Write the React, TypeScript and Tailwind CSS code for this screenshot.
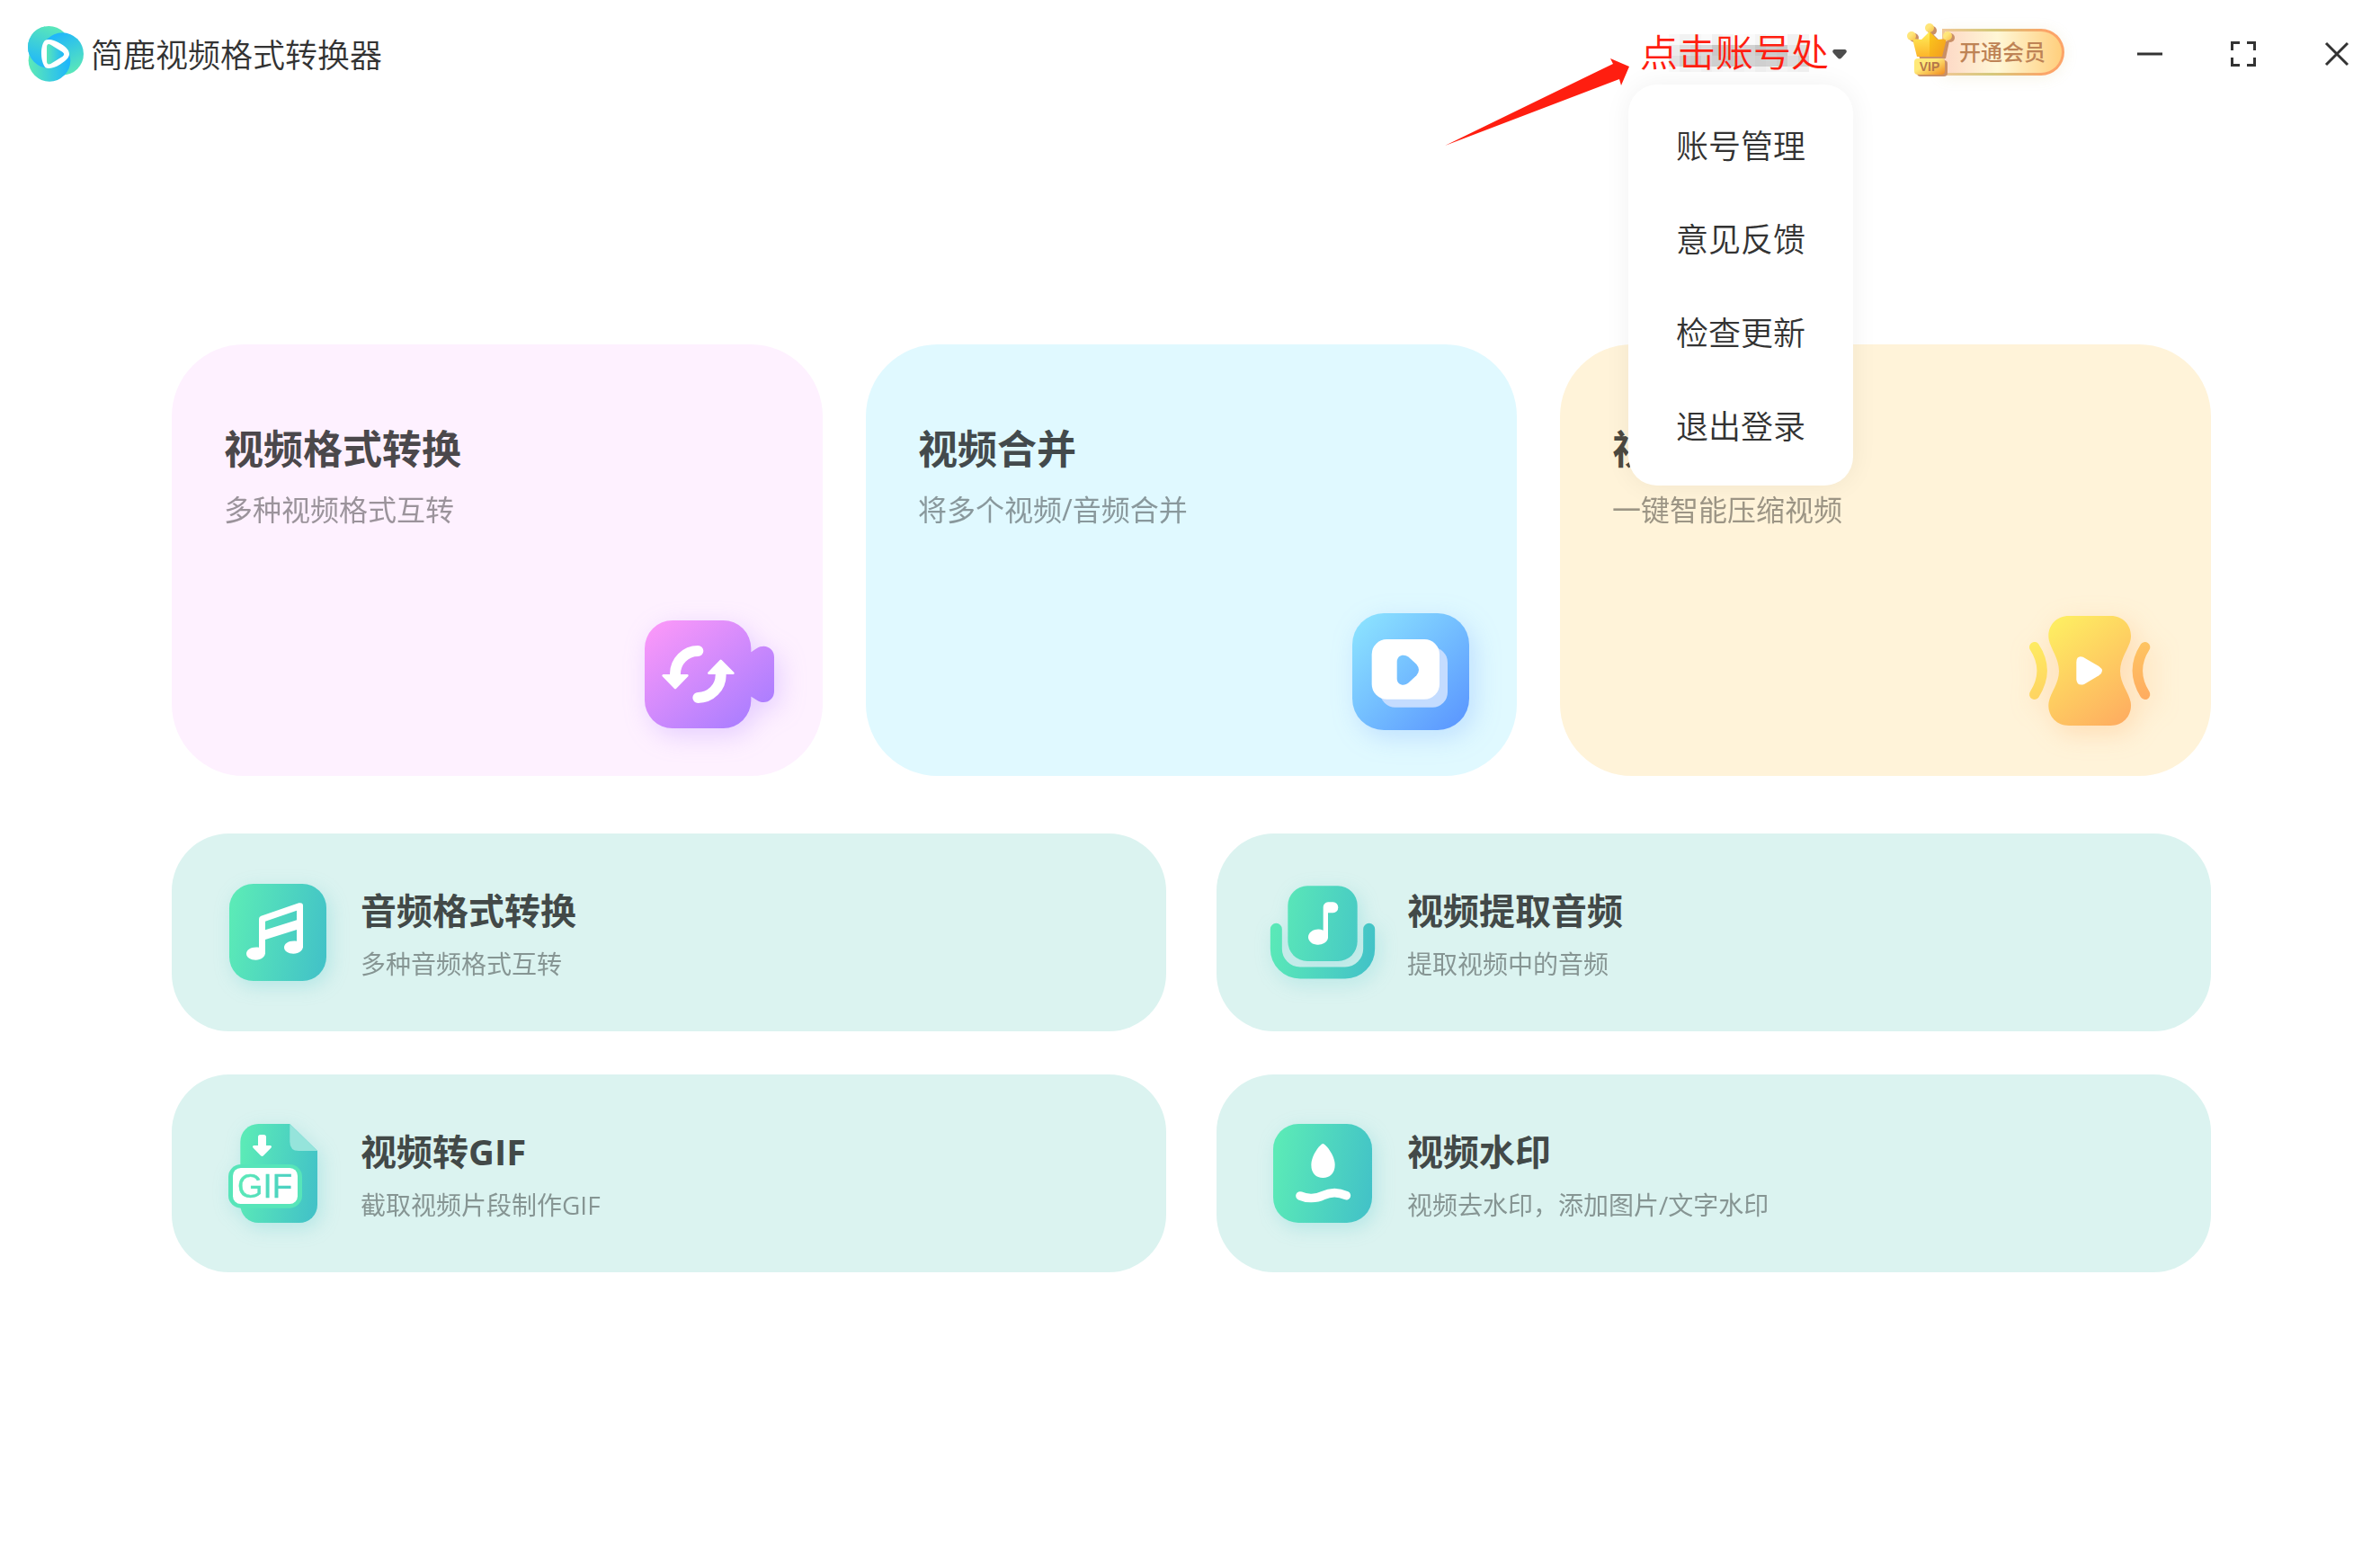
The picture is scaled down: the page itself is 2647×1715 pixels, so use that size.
import React, { useState } from 'react';

interface Tool {
  title: string;
  desc: string;
  icon: React.ReactNode;
  className: string;
}

function Logo() {
  return (
    <svg viewBox="93 87 186 186" className="h-[62px] w-[62px] flex-shrink-0" aria-hidden="true">
      <defs>
        <linearGradient id="logoA" gradientUnits="userSpaceOnUse" x1="180" y1="87" x2="130" y2="225">
          <stop offset="0" stopColor="#5be8b8" />
          <stop offset="1" stopColor="#1fb6fb" />
        </linearGradient>
        <linearGradient id="logoB" gradientUnits="userSpaceOnUse" x1="185" y1="115" x2="245" y2="245">
          <stop offset="0" stopColor="#1fb6fb" />
          <stop offset="1" stopColor="#5be8b8" />
        </linearGradient>
        <linearGradient id="logoC" gradientUnits="userSpaceOnUse" x1="100" y1="210" x2="230" y2="205">
          <stop offset="0" stopColor="#5be8b8" />
          <stop offset="1" stopColor="#1fb6fb" />
        </linearGradient>
        <linearGradient id="logoD" gradientUnits="userSpaceOnUse" x1="155" y1="180" x2="214" y2="180">
          <stop offset="0" stopColor="#5be8b8" />
          <stop offset="1" stopColor="#1fb6fb" />
        </linearGradient>
        <clipPath id="logoClip">
          <path d="M93 87 H150 V157 H165 V273 H93 Z" />
        </clipPath>
      </defs>
      <circle cx="163" cy="157" r="70" fill="url(#logoA)" />
      <circle cx="208" cy="180" r="71" fill="url(#logoB)" />
      <circle cx="165" cy="202" r="70" fill="url(#logoC)" />
      <circle cx="163" cy="157" r="70" fill="url(#logoA)" clipPath="url(#logoClip)" />
      <path
        d="M150 135 C160 128 182 133 203 146 C224 158 231 170 231 180 C231 191 222 202 200 215 C180 227 161 231 152 226 C144 217 138 200 138 178 C138 158 143 142 150 135 Z"
        fill="#fff" />
      <path
        d="M156 158 Q156 143 169 149 L209 174 Q218 181 209 188 L169 213 Q156 218 156 204 Z"
        fill="url(#logoD)" />
    </svg>);

}

function Crown() {
  return (
    <svg viewBox="0 0 54 60" className="absolute -left-[42px] -top-[9px] h-[60px] w-[54px]" aria-hidden="true">
      <defs>
        <linearGradient id="crownL" x1="0" y1="0" x2="0" y2="1">
          <stop offset="0" stopColor="#fff05c" />
          <stop offset="1" stopColor="#fdb52a" />
        </linearGradient>
        <linearGradient id="crownR" x1="0" y1="0" x2="1" y2="1">
          <stop offset="0" stopColor="#fbc91c" />
          <stop offset="1" stopColor="#f39a1e" />
        </linearGradient>
        <linearGradient id="crownTag" x1="0" y1="0" x2="1" y2="1">
          <stop offset="0.4" stopColor="#ffe978" />
          <stop offset="1" stopColor="#f08a1d" />
        </linearGradient>
        <linearGradient id="crownBall" x1="0" y1="0" x2="1" y2="1">
          <stop offset="0.4" stopColor="#ffe67a" />
          <stop offset="1" stopColor="#f8c04a" />
        </linearGradient>
      </defs>
      <g fill="#c98f66" transform="translate(3 2)">
        <circle cx="5" cy="14" r="5" />
        <circle cx="25" cy="6" r="5" />
        <circle cx="45" cy="14" r="5" />
        <path d="M6 18 L16 18 L25 9 L34 18 L44 18 L40 37 H11 Z" />
        <rect x="8" y="39" width="34" height="18" rx="4" />
      </g>
      <path d="M6 17 L16 18 L25 9 V37 H11 Z" fill="url(#crownL)" />
      <path d="M25 9 L34 18 L44 17 L39 37 H25 Z" fill="url(#crownR)" />
      <circle cx="5" cy="14" r="5" fill="url(#crownBall)" />
      <circle cx="25" cy="5" r="5" fill="url(#crownBall)" />
      <circle cx="45" cy="14" r="5" fill="url(#crownBall)" />
      <rect x="8" y="39" width="34" height="18" rx="4" fill="url(#crownTag)" />
      <text
        x="25"
        y="53"
        textAnchor="middle"
        fontSize="14"
        fontWeight="700"
        fontFamily="'Liberation Sans', sans-serif"
        fill="#b5774a">
        VIP
      </text>
    </svg>);

}

function ConvertIcon() {
  return (
    <svg
      viewBox="102 96 444 390"
      className="h-[130px] w-[148px] overflow-visible drop-shadow-[6px_8px_14px_rgba(171,125,255,0.3)]"
      aria-hidden="true">
      <defs>
        <linearGradient id="convert" gradientUnits="userSpaceOnUse" x1="150" y1="120" x2="440" y2="490">
          <stop offset="0" stopColor="#fb98f9" />
          <stop offset="1" stopColor="#a97dff" />
        </linearGradient>
      </defs>
      <path
        d="M204 120 H373 A93 93 0 0 1 466 213 V226 C480 217 490 206 508 206 A35 36 0 0 1 543 242 V357 A35 36 0 0 1 508 393 C490 393 480 381 466 374 V387 A93 93 0 0 1 373 480 H204 A93 93 0 0 1 111 387 V213 A93 93 0 0 1 204 120 Z"
        fill="url(#convert)" />
      <g fill="none" stroke="#fff" strokeWidth="36" strokeLinecap="round">
        <path d="M289 222 A76 76 0 0 0 213 298" />
        <path d="M289 378 A76 76 0 0 0 365 302" />
      </g>
      <g fill="#fff" stroke="#fff" strokeWidth="8" strokeLinejoin="round">
        <path d="M173 304 H253 L213 345 Z" />
        <path d="M325 296 H406 L365 255 Z" />
      </g>
    </svg>);

}

function MergeIcon() {
  return (
    <svg
      viewBox="78 96 444 390"
      className="h-[130px] w-[148px] overflow-visible drop-shadow-[6px_8px_14px_rgba(91,150,255,0.25)]"
      aria-hidden="true">
      <defs>
        <linearGradient id="merge" gradientUnits="userSpaceOnUse" x1="150" y1="120" x2="500" y2="470">
          <stop offset="0" stopColor="#8be2ff" />
          <stop offset="0.4" stopColor="#78c5ff" />
          <stop offset="1" stopColor="#5b97ff" />
        </linearGradient>
      </defs>
      <rect x="132" y="96" width="390" height="390" rx="105" fill="url(#merge)" />
      <rect x="225" y="210" width="225" height="200" rx="50" fill="#c4dcff" />
      <rect x="197" y="183" width="226" height="200" rx="50" fill="#fff" />
      <path
        d="M281 258 C281 236 304 230 320 242 L346 266 Q362 285 346 304 L320 328 C304 342 281 334 281 314 Z"
        fill="url(#merge)" />
    </svg>);

}

function CompressIcon() {
  return (
    <svg
      viewBox="174 96 444 390"
      className="h-[130px] w-[148px] overflow-visible drop-shadow-[6px_8px_14px_rgba(255,172,96,0.3)]"
      aria-hidden="true">
      <defs>
        <linearGradient id="compress" gradientUnits="userSpaceOnUse" x1="250" y1="140" x2="490" y2="450">
          <stop offset="0" stopColor="#feec62" />
          <stop offset="1" stopColor="#feae60" />
        </linearGradient>
        <linearGradient id="compressL" gradientUnits="userSpaceOnUse" x1="170" y1="192" x2="230" y2="384">
          <stop offset="0" stopColor="#feec62" />
          <stop offset="1" stopColor="#fed262" />
        </linearGradient>
        <linearGradient id="compressR" gradientUnits="userSpaceOnUse" x1="530" y1="192" x2="570" y2="384">
          <stop offset="0" stopColor="#fec562" />
          <stop offset="1" stopColor="#feab60" />
        </linearGradient>
      </defs>
      <path
        d="M303 105 H443 C487 105 516 142 509 184 C503 215 474 247 474 289 C474 330 503 361 509 392 C516 434 487 471 443 471 H303 C258 471 229 434 236 392 C242 361 270 330 270 289 C270 247 242 215 236 184 C229 142 258 105 303 105 Z"
        fill="url(#compress)" />
      <g fill="none" strokeWidth="34" strokeLinecap="round">
        <path d="M188 209 Q239 287 188 367" stroke="url(#compressL)" />
        <path d="M557 209 Q507 287 557 367" stroke="url(#compressR)" />
      </g>
      <path
        d="M328 259 Q328 236 350 242 L403 273 Q425 288 403 304 L354 333 Q330 340 328 317 Z"
        fill="#fff" />
    </svg>);

}

const smallIcon =
'h-[120px] w-[120px] flex-shrink-0 overflow-visible drop-shadow-[4px_6px_10px_rgba(66,195,199,0.25)]';

function AudioIcon() {
  return (
    <svg viewBox="207 231 360 360" className={smallIcon} aria-hidden="true">
      <defs>
        <linearGradient id="audio" gradientUnits="userSpaceOnUse" x1="225" y1="380" x2="549" y2="440">
          <stop offset="0" stopColor="#5beab7" />
          <stop offset="1" stopColor="#43c3c7" />
        </linearGradient>
      </defs>
      <rect x="225" y="249" width="324" height="324" rx="80" fill="url(#audio)" />
      <g fill="#fff">
        <path
          fillRule="evenodd"
          d="M324 366 Q324 359 331 356 L457 313 Q471 310 471 322 V462 H450 V402 L345 435 V483 H324 Z M345 374 V403 L450 370 V338 Z" />
        <path d="M345 478 C345 493 332 503 313 503 C296 503 282 494 282 482 C282 469 297 458 324 461 Z" />
        <path d="M471 457 C471 472 458 482 439 482 C422 482 408 473 408 461 C408 448 423 437 450 440 Z" />
      </g>
    </svg>);

}

function ExtractIcon() {
  return (
    <svg viewBox="219 231 360 360" className={smallIcon} aria-hidden="true">
      <defs>
        <linearGradient id="extract" gradientUnits="userSpaceOnUse" x1="219" y1="380" x2="567" y2="440">
          <stop offset="0" stopColor="#5beab7" />
          <stop offset="1" stopColor="#43c3c7" />
        </linearGradient>
        <linearGradient id="extractBox" gradientUnits="userSpaceOnUse" x1="277" y1="370" x2="509" y2="410">
          <stop offset="0" stopColor="#58e4b9" />
          <stop offset="1" stopColor="#48cbc4" />
        </linearGradient>
      </defs>
      <path
        d="M238 400 V466 A80 80 0 0 0 318 546 H468 A80 80 0 0 0 548 466 V400"
        fill="none"
        stroke="url(#extract)"
        strokeWidth="39"
        strokeLinecap="round" />
      <rect x="277" y="256" width="232" height="251" rx="65" fill="url(#extractBox)" />
      <g fill="#fff">
        <path d="M395 326 A16 16 0 0 1 411 310 H428 A16 17 0 0 1 428 346 H411 V428 A33 26 0 1 1 395 404 Z" />
      </g>
    </svg>);

}

function GifIcon() {
  return (
    <svg viewBox="207 195 360 360" className={smallIcon} aria-hidden="true">
      <defs>
        <linearGradient id="gif" gradientUnits="userSpaceOnUse" x1="262" y1="350" x2="519" y2="390">
          <stop offset="0" stopColor="#5beab7" />
          <stop offset="1" stopColor="#43c3c7" />
        </linearGradient>
      </defs>
      <path
        d="M322 210 H427 L519 300 V480 A60 60 0 0 1 459 540 H322 A60 60 0 0 1 262 480 V270 A60 60 0 0 1 322 210 Z"
        fill="url(#gif)" />
      <path d="M427 210 L519 300 H457 Q427 300 427 270 Z" fill="#95e4db" />
      <path
        d="M321 254 Q321 246 329 246 H340 Q348 246 348 254 V282 H362 Q369 284 364 290 L339 316 Q335 320 330 316 L305 290 Q300 284 307 282 H321 Z"
        fill="#fff" />
      <rect x="222" y="345" width="246" height="146" rx="42" fill="#57e5b9" />
      <rect x="237" y="357" width="216" height="120" rx="26" fill="#fff" />
      <text
        x="252"
        y="457"
        fontSize="110"
        fontFamily="'Liberation Sans', sans-serif"
        fill="url(#gif)"
        stroke="url(#gif)"
        strokeWidth="1">
        GIF
      </text>
    </svg>);

}

function WatermarkIcon() {
  return (
    <svg viewBox="219 195 360 360" className={smallIcon} aria-hidden="true">
      <defs>
        <linearGradient id="water" gradientUnits="userSpaceOnUse" x1="228" y1="350" x2="558" y2="410">
          <stop offset="0" stopColor="#5beab7" />
          <stop offset="1" stopColor="#43c3c7" />
        </linearGradient>
      </defs>
      <rect x="228" y="210" width="330" height="330" rx="84" fill="url(#water)" />
      <path
        d="M394 276 C402 276 434 314 434 347 C434 374 417 390 394 390 C371 390 355 374 355 347 C355 314 386 276 394 276 Z"
        fill="#fff" />
      <path
        d="M318 450 C336 458 368 462 394 449 C421 436 448 438 472 449"
        fill="none"
        stroke="#fff"
        strokeWidth="29"
        strokeLinecap="round" />
    </svg>);

}

const videoTools: Tool[] = [
{ title: '视频格式转换', desc: '多种视频格式互转', icon: <ConvertIcon />, className: 'bg-[#fef1ff] text-[#4b484b]' },
{ title: '视频合并', desc: '将多个视频/音频合并', icon: <MergeIcon />, className: 'bg-[#e0f9ff] text-[#434a4c]' },
{ title: '视频压缩', desc: '一键智能压缩视频', icon: <CompressIcon />, className: 'bg-[#fff3d9] text-[#4c4941]' }];


const otherTools: Tool[] = [
{ title: '音频格式转换', desc: '多种音频格式互转', icon: <AudioIcon />, className: 'pl-[58px]' },
{ title: '视频提取音频', desc: '提取视频中的音频', icon: <ExtractIcon />, className: 'pl-[60px]' },
{ title: '视频转GIF', desc: '截取视频片段制作GIF', icon: <GifIcon />, className: 'pl-[58px]' },
{ title: '视频水印', desc: '视频去水印，添加图片/文字水印', icon: <WatermarkIcon />, className: 'pl-[60px]' }];


const menuItems = ['账号管理', '意见反馈', '检查更新', '退出登录'];

// Masked user name, one colour per 12px block
const maskRows = [
['#f8f8f8', '#f2f2f2', '#f6f6f6', '#fafafa', '#f1f1f1', '#f5f5f5', '#fcfcfc', '#fafafa', '#f4f4f4', '#f8f8f8', '#fbfbfb', '#f1f1f1', '#f4f4f4'],
['#ebebeb', '#dedede', '#d6d6d6', '#dadada', '#c8c8c8', '#cbcbcb', '#d6d6d6', '#d2d2d2', '#c6c6c6', '#cccccc', '#c9c9c9', '#e6e6e6', '#dcdcdc'],
['#e2e2e2', '#d0d0d0', '#cbcbcb', '#d6d6d6', '#cfcfcf', '#c6c6c6', '#cdcdcd', '#d3d3d3', '#cfcfcf', '#d2d2d2', '#cdcdcd', '#dddddd', '#d2d2d2'],
['#fafafa', '#f3f3f3', '#f7f7f7', '#f1f1f1', '#f5f5f5', '#f8f8f8', '#f2f2f2', '#f6f6f6', '#f0f0f0', '#f4f4f4', '#f7f7f7', '#f3f3f3', '#f1f1f1']];


function AccountMenu() {
  const [open, setOpen] = useState(true);
  return (
    <div className="relative ml-auto pb-1">
      <svg viewBox="0 0 205 98" className="absolute -left-[217px] top-[35px] h-[98px] w-[205px]" aria-hidden="true">
        <path d="M0 97 L187 6 L184 0 L205 9 L196 30 L194 23 Z" fill="#ff1e10" />
      </svg>
      <svg
        viewBox="0 0 156 42"
        className="absolute left-[32px] top-2 h-[42px] w-[156px]"
        shapeRendering="crispEdges"
        aria-hidden="true">
        {maskRows.map((row, y) =>
        row.map((fill, x) =>
        <rect key={`${x}-${y}`} x={x * 12} y={y * 12} width="12" height="12" fill={fill} />
        )
        )}
      </svg>
      <button
        type="button"
        aria-expanded={open}
        onClick={() => setOpen(!open)}
        className="relative flex items-center gap-1 text-[42px] font-[350] leading-[56px] text-[#ff1e10]">
        点击账号处
        <svg viewBox="0 0 16 11" className="mt-1 h-[11px] w-[16px]" aria-hidden="true">
          <path d="M2 0 H14 Q17 1 15 4 L10 9.500 Q8 11.500 6 9.500 L1 4 Q-1 1 2 0 Z" fill="#4d4d4d" />
        </svg>
      </button>
      {open &&
      <ul className="absolute -left-[13px] top-[64px] z-10 w-[250px] rounded-[32px] bg-white pb-[13px] pt-[17px] shadow-[0_0_30px_rgba(0,0,0,0.06)]">
          {menuItems.map((item) =>
        <li key={item}>
              <button type="button" className="h-[104px] w-full text-center text-[36px] font-[350] leading-[48px] text-[#333]">
                {item}
              </button>
            </li>
        )}
        </ul>
      }
    </div>);

}

export default function App() {
  return (
    <div className="min-h-screen bg-white font-['Open_Sans','Noto_Sans_CJK_SC',sans-serif]">
      {/* Title bar */}
      <header className="flex h-[120px] items-center pl-[31px] pr-[34px]">
        <Logo />
        <h1 className="ml-2 pt-[3px] text-[36px] font-[350] leading-[48px] text-[#333]">简鹿视频格式转换器</h1>

        <AccountMenu />

        <div className="ml-[106px] pb-1">
          <button
            type="button"
            className="relative flex h-[52px] w-[136px] items-center rounded-r-full rounded-tl-[12px] border-3 border-transparent pl-4 text-[24px] font-medium leading-8 text-[#be8355] shadow-[0_2px_16px_rgba(200,180,90,0.15)] [background:linear-gradient(90deg,#fdd9c6,#fff7d6_45%,#ffcf7d)_padding-box,linear-gradient(90deg,#f0c795,#d5c97c_40%,#fca468_85%)_border-box]">
            <Crown />
            开通会员
          </button>
        </div>

        <div className="ml-[81px] flex gap-[76px]">
          <button type="button" aria-label="最小化">
            <svg viewBox="0 0 28 28" className="block h-7 w-7" stroke="#333" strokeWidth="3">
              <path d="M0 14 H28" />
            </svg>
          </button>
          <button type="button" aria-label="全屏">
            <svg viewBox="0 0 28 28" className="block h-7 w-7" fill="none" stroke="#333" strokeWidth="3">
              <path d="M1.500 10 V1.500 H10 M18 1.500 H26.500 V10 M26.500 18 V26.500 H18 M10 26.500 H1.500 V18" />
            </svg>
          </button>
          <button type="button" aria-label="关闭">
            <svg viewBox="0 0 28 28" className="block h-7 w-7" stroke="#333" strokeWidth="3">
              <path d="M2 2 L26 26 M26 2 L2 26" />
            </svg>
          </button>
        </div>
      </header>

      <main className="pb-12 pl-[191px] pr-[188px] pt-[263px]">
        {/* Video tools */}
        <div className="grid grid-cols-3 gap-12">
          {videoTools.map((tool) =>
          <button
            key={tool.title}
            type="button"
            className={`flex h-[480px] flex-col rounded-[80px] pb-[51px] pl-[58px] pr-[53px] pt-[88px] text-left ${tool.className}`}>
            
              <span className="text-[44px] font-bold leading-[56px]">{tool.title}</span>
              <span className="mt-5 text-[32px] leading-[40px] opacity-55">{tool.desc}</span>
              <span className="ml-auto mt-auto">{tool.icon}</span>
            </button>
          )}
        </div>

        {/* Audio, GIF and watermark tools */}
        <div className="mt-16 grid grid-cols-2 gap-x-14 gap-y-12">
          {otherTools.map((tool) =>
          <button
            key={tool.title}
            type="button"
            className={`flex h-[220px] items-center gap-8 rounded-[64px] bg-[#dbf3f0] text-left ${tool.className}`}>
            
              {tool.icon}
              <span className="flex flex-col gap-[17px] pt-1 text-[#424948]">
                <span className="text-[40px] font-bold leading-[48px]">{tool.title}</span>
                <span className="text-[28px] leading-[36px] opacity-55">{tool.desc}</span>
              </span>
            </button>
          )}
        </div>
      </main>
    </div>);

}
